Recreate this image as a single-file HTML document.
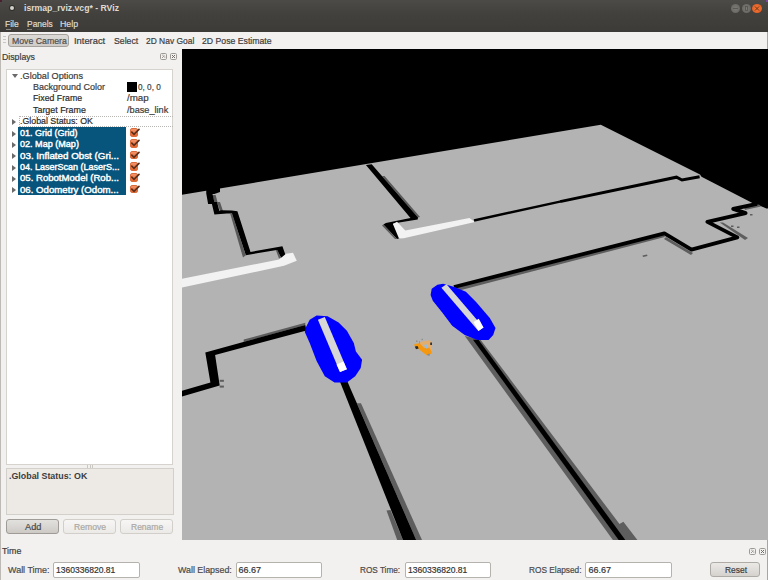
<!DOCTYPE html>
<html><head><meta charset="utf-8">
<style>
*{margin:0;padding:0;box-sizing:border-box}
html,body{width:768px;height:580px;overflow:hidden;background:#f2f1f0;font-family:"Liberation Sans",sans-serif;font-size:9px;color:#3c3c3c;position:relative}
.a{position:absolute}
.t{position:absolute;white-space:nowrap;line-height:10px;transform-origin:0 0;-webkit-text-stroke:0.2px currentColor}
.btn{position:absolute;border:1px solid #a9a7a3;border-radius:3px;background:linear-gradient(#f6f5f4,#e2e0dd)}
.inp{position:absolute;border:1px solid #b6b3ae;border-radius:2px;background:#fff}
.cb{position:absolute;width:8.5px;height:8.7px;border:1px solid #dc6c3c;border-radius:2px;background:linear-gradient(#f39469,#e5652d)}
.tri{position:absolute;width:0;height:0}
</style></head><body>
<div class="a" style="left:0;top:0;width:768px;height:32px;background:linear-gradient(#4c4b47,#42413d 40%,#3c3b37)"></div>
<div class="a" style="left:9px;top:5px;width:6px;height:6px;border-radius:50%;background:#2f2e2b"></div><div class="a" style="left:10px;top:6px;width:4px;height:4px;border-radius:50%;background:#d3d0ca"></div><div class="a" style="left:0;top:0;width:2px;height:2px;background:#4a1f30"></div><div class="a" style="left:766px;top:0;width:2px;height:2px;background:#7a4a9a"></div>
<div class="a" style="left:6px;top:29px;width:5px;height:1px;background:#8f8c85"></div>
<div class="a" style="left:27px;top:29px;width:5px;height:1px;background:#8f8c85"></div>
<div class="a" style="left:60px;top:29px;width:6px;height:1px;background:#8f8c85"></div>
<div class="a" style="left:731px;top:4px;width:9px;height:9px;border-radius:50%;background:radial-gradient(#7d7c77,#62615d)"></div>
<div class="a" style="left:733px;top:8px;width:5px;height:1px;background:#5a5955"></div>
<div class="a" style="left:742px;top:4px;width:9px;height:9px;border-radius:50%;background:radial-gradient(#7d7c77,#62615d)"></div>
<div class="a" style="left:745px;top:6px;width:3px;height:5px;border:1px solid #5a5955"></div>
<div class="a" style="left:752px;top:4px;width:10px;height:9px;border-radius:50%;background:radial-gradient(#f47a3c,#e0561d)"></div>
<svg class="a" style="left:752px;top:4px" width="10" height="9"><path d="M3 2.5L7 6.5M7 2.5L3 6.5" stroke="#6a3414" stroke-width="1"/></svg>

<div class="a" style="left:0;top:32px;width:768px;height:17px;background:#f2f1f0"></div>
<div class="a" style="left:3px;top:36px;width:3px;height:1px;background:#c8c6c2"></div>
<div class="a" style="left:3px;top:39px;width:3px;height:1px;background:#c8c6c2"></div>
<div class="a" style="left:3px;top:42px;width:3px;height:1px;background:#c8c6c2"></div>
<div class="btn" style="left:8px;top:34px;width:61px;height:13px;background:linear-gradient(#dcdad6,#cfccc8);border-color:#a5a29d"></div>

<div class="a" style="left:0;top:32px;width:1px;height:548px;background:#bdbab5"></div>
<svg class="a" style="left:160px;top:53px" width="7" height="7"><rect x="0.5" y="0.5" width="6" height="6" rx="1.2" fill="#f4f3f2" stroke="#9d9a95"/><path d="M2 5 L4.5 2.5 M2.2 2.2 H3.5 M4.8 4.8 V3.5" stroke="#8f8c87" stroke-width="0.9"/></svg><svg class="a" style="left:170px;top:53px" width="7" height="7"><rect x="0.5" y="0.5" width="6" height="6" rx="1.2" fill="#f4f3f2" stroke="#9d9a95"/><path d="M2 2 L5 5 M5 2 L2 5" stroke="#6f6c67" stroke-width="1"/></svg>
<div class="a" style="left:6px;top:69px;width:167px;height:396px;background:#fff;border:1px solid #d6d3ce"></div>
<div class="tri" style="left:12px;top:74px;border-left:3px solid transparent;border-right:3px solid transparent;border-top:4px solid #6a6a6a"></div>
<div class="a" style="left:127px;top:82px;width:10px;height:10px;background:#000"></div>
<div class="a" style="left:19px;top:116px;width:154px;height:11px;border:1px dotted #b9b7b3;border-right:none"></div>
<div class="tri" style="left:12px;top:119px;border-top:3px solid transparent;border-bottom:3px solid transparent;border-left:4px solid #6a6a6a"></div>
<div class="a" style="left:18px;top:127px;width:108px;height:68px;background:#07547c"></div>
<div class="cb" style="left:129.5px;top:128.00px"></div>
<svg class="a" style="left:129.5px;top:127.00px" width="11" height="11"><path d="M1.8 5.2 L4 7.3 L9 2.3" stroke="#5b2f1c" stroke-width="1.7" fill="none" stroke-linecap="round"/></svg>
<div class="cb" style="left:129.5px;top:139.33px"></div>
<svg class="a" style="left:129.5px;top:138.33px" width="11" height="11"><path d="M1.8 5.2 L4 7.3 L9 2.3" stroke="#5b2f1c" stroke-width="1.7" fill="none" stroke-linecap="round"/></svg>
<div class="cb" style="left:129.5px;top:150.66px"></div>
<svg class="a" style="left:129.5px;top:149.66px" width="11" height="11"><path d="M1.8 5.2 L4 7.3 L9 2.3" stroke="#5b2f1c" stroke-width="1.7" fill="none" stroke-linecap="round"/></svg>
<div class="cb" style="left:129.5px;top:161.99px"></div>
<svg class="a" style="left:129.5px;top:160.99px" width="11" height="11"><path d="M1.8 5.2 L4 7.3 L9 2.3" stroke="#5b2f1c" stroke-width="1.7" fill="none" stroke-linecap="round"/></svg>
<div class="cb" style="left:129.5px;top:173.32px"></div>
<svg class="a" style="left:129.5px;top:172.32px" width="11" height="11"><path d="M1.8 5.2 L4 7.3 L9 2.3" stroke="#5b2f1c" stroke-width="1.7" fill="none" stroke-linecap="round"/></svg>
<div class="cb" style="left:129.5px;top:184.65px"></div>
<svg class="a" style="left:129.5px;top:183.65px" width="11" height="11"><path d="M1.8 5.2 L4 7.3 L9 2.3" stroke="#5b2f1c" stroke-width="1.7" fill="none" stroke-linecap="round"/></svg>
<div class="tri" style="left:12px;top:130.5px;border-top:3px solid transparent;border-bottom:3px solid transparent;border-left:4px solid #6a6a6a"></div>
<div class="tri" style="left:12px;top:141.8px;border-top:3px solid transparent;border-bottom:3px solid transparent;border-left:4px solid #6a6a6a"></div>
<div class="tri" style="left:12px;top:153.2px;border-top:3px solid transparent;border-bottom:3px solid transparent;border-left:4px solid #6a6a6a"></div>
<div class="tri" style="left:12px;top:164.5px;border-top:3px solid transparent;border-bottom:3px solid transparent;border-left:4px solid #6a6a6a"></div>
<div class="tri" style="left:12px;top:175.8px;border-top:3px solid transparent;border-bottom:3px solid transparent;border-left:4px solid #6a6a6a"></div>
<div class="tri" style="left:12px;top:187.2px;border-top:3px solid transparent;border-bottom:3px solid transparent;border-left:4px solid #6a6a6a"></div>

<div class="a" style="left:6px;top:468px;width:168px;height:47px;background:#edeae6;border:1px solid #d3d0cb"></div>
<div class="btn" style="left:6px;top:519px;width:53px;height:15px;background:linear-gradient(#e3e1de,#cdcac6);border-color:#9f9c97"></div>
<div class="btn" style="left:63px;top:519px;width:53px;height:15px;background:linear-gradient(#f7f6f5,#eceae7);border-color:#d2cfca"></div>
<div class="btn" style="left:120px;top:519px;width:53px;height:15px;background:linear-gradient(#f7f6f5,#eceae7);border-color:#d2cfca"></div>

<svg class="a" style="left:749px;top:548px" width="7" height="7"><rect x="0.5" y="0.5" width="6" height="6" rx="1.2" fill="#f4f3f2" stroke="#9d9a95"/><path d="M2 5 L4.5 2.5 M2.2 2.2 H3.5 M4.8 4.8 V3.5" stroke="#8f8c87" stroke-width="0.9"/></svg><svg class="a" style="left:759px;top:548px" width="7" height="7"><rect x="0.5" y="0.5" width="6" height="6" rx="1.2" fill="#f4f3f2" stroke="#9d9a95"/><path d="M2 2 L5 5 M5 2 L2 5" stroke="#6f6c67" stroke-width="1"/></svg>
<div class="inp" style="left:53px;top:562px;width:87px;height:16px"></div>
<div class="inp" style="left:236px;top:562px;width:86px;height:16px"></div>
<div class="inp" style="left:405px;top:562px;width:86px;height:16px"></div>
<div class="inp" style="left:585px;top:562px;width:87px;height:16px"></div>
<div class="btn" style="left:710px;top:562px;width:50px;height:15px;background:linear-gradient(#ebe9e6,#d5d2ce);border-color:#aeaba6"></div>
<div class="a" style="left:767px;top:32px;width:1px;height:548px;background:#a9a6a1"></div>

<div class="a" style="left:87px;top:465px;width:1px;height:3px;background:#cac7c2"></div><div class="a" style="left:89.5px;top:465px;width:1px;height:3px;background:#cac7c2"></div><div class="a" style="left:92px;top:465px;width:1px;height:3px;background:#cac7c2"></div>

<svg class="a" style="left:182px;top:49px" width="586" height="491" viewBox="182 49 586 491" shape-rendering="geometricPrecision">
<rect x="182" y="49" width="586" height="491" fill="#000"/>
<!-- floor -->
<polygon fill="#b3b3b3" points="182,194.8 600.8,124.8 700,174.6 701.5,176.7 753.9,203.8 760.1,205.8 766.3,208.4 768,208.4 768,540 182,540"/>
<!-- top-right step wall region -->
<polyline fill="none" stroke="#000" stroke-width="3" points="560,201.6 676.5,177.2 682,180 699.6,176.7"/>
<!-- W1 left zigzag -->
<polygon fill="#5a5a5a" points="212.5,195 215.6,195 217.5,202 214.4,202"/>
<polygon fill="#5a5a5a" points="217,202 220,202 223,211 220,211"/>
<polygon fill="#000" points="206.25,193.4 206.25,188.5 220,186.2 220,192.1 214.4,194 212.5,194 214.4,202 217,202 219.4,211 221,210.3 231.75,210.5 237.4,211.2 250.5,251.9 282.4,246.3 286.1,256.6 281.4,258 276.7,250 245.8,255.2 231.75,213.5 226.9,213.4 214.4,214.6 211.9,204 208.1,204"/>
<polygon fill="#5a5a5a" points="230,213 232,213 245.8,255.2 243,257.5"/>
<polygon fill="#5a5a5a" points="275.8,250 277.5,250 281,258 279,258.5"/>
<!-- W1 white strip -->
<polygon fill="#f2f2f2" points="182,278.8 279,259.5 286,253.8 293,252.8 296.8,260.8 284,265.8 182,287.4"/>
<!-- W_top -->
<polygon fill="#5a5a5a" points="382,176 384.5,176 420,217 418,217.5"/>
<polygon fill="#000" points="365.9,165 371.7,164.3 418,217.5 417.7,219.5 393,223.5 402,237.4 397,239 383.4,224.6 385.9,222.9 410.5,218"/>
<polygon fill="#5a5a5a" points="382,225.5 383.4,224.6 397,239 395,239"/>
<polygon fill="#f2f2f2" points="392.9,224.1 397,221.7 405.3,230.4 469.4,217.9 474.9,222 403.7,238.2 399,238.5"/>
<polyline fill="none" stroke="#000" stroke-width="2.5" points="474,220.5 560,201.6"/>
<!-- W2 middle wall -->
<polyline fill="none" stroke="#5e5e5e" stroke-width="3.5" points="456,289.5 664.4,235.3"/>
<polygon fill="#5e5e5e" points="666,237 693,253 691,255 664,239"/>
<polygon fill="#5e5e5e" points="719.8,222.5 723,222.5 748,238 745,240"/>
<polygon fill="#5e5e5e" points="744,207.5 759,204.5 761,206.5 745,210"/>
<polyline fill="none" stroke="#000" stroke-width="3.8" stroke-linejoin="round" points="454,287 664.4,233.3 691.5,249.6 737.4,237.4 707.4,221.9 745.6,213.1 733.2,208.9 757,203.8"/>
<rect x="731" y="225.5" width="2.5" height="1.5" fill="#5e5e5e"/>
<rect x="737" y="226.5" width="2.5" height="1.5" fill="#5e5e5e"/>
<rect x="750" y="214" width="2.5" height="1.5" fill="#5e5e5e"/>
<!-- W3 left lower zigzag -->
<polygon fill="#5e5e5e" points="243.7,339.6 305.3,322.8 305.3,325 243.7,342"/>
<polygon fill="#000" points="305.3,325 306.5,330.5 215.1,355 219.7,385.5 182,396.4 182,390.7 210.4,382.4 205.3,352.4"/>
<rect x="219.7" y="379.8" width="4.2" height="2" fill="#5e5e5e"/>
<rect x="219.7" y="385.6" width="4.2" height="2" fill="#5e5e5e"/>
<!-- W4 -->
<polygon fill="#5e5e5e" points="356.9,403.3 361,403.3 422,540 416.2,540"/>
<polygon fill="#5e5e5e" points="386.5,510.4 390.5,510 403,540 397.2,540"/>
<polygon fill="#000" points="340,381.7 347.5,381.7 416.2,540 403,540"/>
<!-- W5 -->
<polygon fill="#5e5e5e" points="464.8,336 480.5,339.7 619.5,524 623.4,521.7 637.4,540 612.9,540"/>
<polygon fill="#000" points="473,339.7 478.5,339.7 625.3,540 618.7,540"/>
<!-- blob left -->
<polygon fill="#0000ff" points="305.5,327.9 309.7,319.7 316.6,315.5 327.6,316.2 338.6,322.4 346.9,330.7 353.8,343.1 355.9,351.4 362.1,359.7 360.7,367.9 355.2,376.2 346.9,382.4 334.5,382.4 324.8,376.2 316.6,361 309.7,343.1 304.8,332"/>
<polygon fill="#d6d6d6" points="317.9,319.7 324.8,316.9 346.9,369.3 340,372"/>
<polygon fill="#ffffff" points="336.5,364.5 343.5,361.5 346.9,369.3 340,372"/>
<!-- blob right -->
<polygon fill="#0000ff" points="430.6,295.1 431.7,288.8 437.4,284.8 443.1,283.7 454.5,287.1 465.9,291.7 476.1,301.9 489.8,317.9 495.5,328.1 493.2,335 488.6,340.1 477.3,340.1 464.7,335 452.2,325.8 442,312.2 432.8,300.8"/>
<polygon fill="#d6d6d6" points="441.4,287.7 446.5,284.3 483.5,327.5 478.4,331"/>
<polygon fill="#ffffff" points="473.5,322 478.8,318.8 483.5,327.5 478.4,331"/>
<!-- robot -->
<polygon fill="#e3ad6e" points="419.5,343.3 420.3,342.1 429,340.2 431.4,341.7 431.8,352 424.3,348.1"/>
<polygon fill="#f6980f" points="414.4,344.1 419.5,343.3 424.3,348.1 429.4,347.7 431.8,352.1 431.4,353.7 426.7,355.2 421.1,350.9 416,346.9 414.4,345.7"/>
<polygon fill="#94bde0" points="424,345 426.5,344.2 428.5,347.5 426,348.8"/>
<polygon fill="#2a2a2a" points="414.8,346.5 417.5,346.1 418.7,348.5 416,349.3"/>
<rect x="430.2" y="342.5" width="1.8" height="2.5" fill="#333"/>
<rect x="427.5" y="353.8" width="2.3" height="1.8" fill="#8a8a8a"/>
<rect x="416" y="340.5" width="1.5" height="1.5" fill="#8f8f8f"/>
<rect x="421.5" y="338.8" width="1.5" height="1.3" fill="#8f8f8f"/>
<rect x="419" y="341" width="0.8" height="2.5" fill="#8f8f8f"/>
<!-- dashes -->
<polygon fill="#5e5e5e" points="642.5,255.5 647,254.5 647.5,256 643,257"/>
</svg>
<div class="t" style="left:24px;top:3.28px;font-size:9px;font-weight:bold;color:#dfdbd2;transform:scaleX(0.962);-webkit-text-stroke:0;">isrmap_rviz.vcg* - RViz</div>
<div class="t" style="left:5px;top:19.31px;font-size:9.5px;font-weight:normal;color:#dfdbd2;transform:scaleX(0.895);">File</div>
<div class="t" style="left:26.6px;top:19.31px;font-size:9.5px;font-weight:normal;color:#dfdbd2;transform:scaleX(0.888);">Panels</div>
<div class="t" style="left:60.2px;top:19.31px;font-size:9.5px;font-weight:normal;color:#dfdbd2;transform:scaleX(0.921);">Help</div>
<div class="t" style="left:11.5px;top:36.18px;font-size:9px;font-weight:normal;color:#4f4f4f;transform:scaleX(0.969);">Move Camera</div>
<div class="t" style="left:74px;top:36.18px;font-size:9px;font-weight:normal;color:#3c3c3c;transform:scaleX(1.039);">Interact</div>
<div class="t" style="left:113.5px;top:36.18px;font-size:9px;font-weight:normal;color:#3c3c3c;transform:scaleX(0.967);">Select</div>
<div class="t" style="left:146px;top:36.18px;font-size:9px;font-weight:normal;color:#3c3c3c;transform:scaleX(0.937);">2D Nav Goal</div>
<div class="t" style="left:202.3px;top:36.18px;font-size:9px;font-weight:normal;color:#3c3c3c;transform:scaleX(0.966);">2D Pose Estimate</div>
<div class="t" style="left:2.25px;top:51.88px;font-size:9px;font-weight:normal;color:#3c3c3c;transform:scaleX(0.970);">Displays</div>
<div class="t" style="left:20px;top:70.68px;font-size:9px;font-weight:normal;color:#3c3c3c;transform:scaleX(1.016);">.Global Options</div>
<div class="t" style="left:32.75px;top:82.28px;font-size:9px;font-weight:normal;color:#3c3c3c;transform:scaleX(0.999);">Background Color</div>
<div class="t" style="left:32.75px;top:93.48px;font-size:9px;font-weight:normal;color:#2a2a2a;transform:scaleX(0.972);">Fixed Frame</div>
<div class="t" style="left:32.75px;top:104.78px;font-size:9px;font-weight:normal;color:#2a2a2a;transform:scaleX(0.988);">Target Frame</div>
<div class="t" style="left:20px;top:116.38px;font-size:9px;font-weight:normal;color:#2a2a2a;transform:scaleX(0.979);">.Global Status: OK</div>
<div class="t" style="left:138.25px;top:82.28px;font-size:9px;font-weight:normal;color:#3c3c3c;transform:scaleX(0.909);">0, 0, 0</div>
<div class="t" style="left:127.25px;top:93.48px;font-size:9px;font-weight:normal;color:#3c3c3c;transform:scaleX(1.087);">/map</div>
<div class="t" style="left:127.25px;top:104.78px;font-size:9px;font-weight:normal;color:#3c3c3c;transform:scaleX(1.018);">/base_link</div>
<div class="t" style="left:20.3px;top:127.92px;font-size:8.6px;font-weight:normal;color:#ffffff;transform:scaleX(1.049);-webkit-text-stroke:0.4px #fff;">01. Grid (Grid)</div>
<div class="t" style="left:20.3px;top:139.30px;font-size:8.6px;font-weight:normal;color:#ffffff;transform:scaleX(1.054);-webkit-text-stroke:0.4px #fff;">02. Map (Map)</div>
<div class="t" style="left:20.3px;top:150.68px;font-size:8.6px;font-weight:normal;color:#ffffff;transform:scaleX(1.139);-webkit-text-stroke:0.4px #fff;">03. Inflated Obst (Gri...</div>
<div class="t" style="left:20.3px;top:162.06px;font-size:8.6px;font-weight:normal;color:#ffffff;transform:scaleX(1.047);-webkit-text-stroke:0.4px #fff;">04. LaserScan (LaserS...</div>
<div class="t" style="left:20.3px;top:173.44px;font-size:8.6px;font-weight:normal;color:#ffffff;transform:scaleX(1.114);-webkit-text-stroke:0.4px #fff;">05. RobotModel (Rob...</div>
<div class="t" style="left:20.3px;top:184.82px;font-size:8.6px;font-weight:normal;color:#ffffff;transform:scaleX(1.122);-webkit-text-stroke:0.4px #fff;">06. Odometry (Odom...</div>
<div class="t" style="left:8.5px;top:471.38px;font-size:9px;font-weight:bold;color:#3c3c3c;transform:scaleX(0.985);-webkit-text-stroke:0;">.Global Status: OK</div>
<div class="t" style="left:25px;top:521.68px;font-size:9px;font-weight:normal;color:#4a4a4a;transform:scaleX(1.024);">Add</div>
<div class="t" style="left:74.2px;top:521.68px;font-size:9px;font-weight:normal;color:#aaa8a4;transform:scaleX(0.955);">Remove</div>
<div class="t" style="left:130.9px;top:521.68px;font-size:9px;font-weight:normal;color:#aaa8a4;transform:scaleX(0.944);">Rename</div>
<div class="t" style="left:2.3px;top:546.28px;font-size:9px;font-weight:normal;color:#3c3c3c;transform:scaleX(0.981);">Time</div>
<div class="t" style="left:7.5px;top:564.68px;font-size:9px;font-weight:normal;color:#4a4a4a;transform:scaleX(0.997);">Wall Time:</div>
<div class="t" style="left:56.25px;top:564.68px;font-size:9px;font-weight:normal;color:#333333;transform:scaleX(0.948);">1360336820.81</div>
<div class="t" style="left:177.5px;top:564.68px;font-size:9px;font-weight:normal;color:#4a4a4a;transform:scaleX(0.983);">Wall Elapsed:</div>
<div class="t" style="left:238.5px;top:564.68px;font-size:9px;font-weight:normal;color:#333333;">66.67</div>
<div class="t" style="left:360px;top:564.68px;font-size:9px;font-weight:normal;color:#4a4a4a;transform:scaleX(0.911);">ROS Time:</div>
<div class="t" style="left:407.5px;top:564.68px;font-size:9px;font-weight:normal;color:#333333;transform:scaleX(0.948);">1360336820.81</div>
<div class="t" style="left:528.75px;top:564.68px;font-size:9px;font-weight:normal;color:#4a4a4a;transform:scaleX(0.921);">ROS Elapsed:</div>
<div class="t" style="left:588.5px;top:564.68px;font-size:9px;font-weight:normal;color:#333333;">66.67</div>
<div class="t" style="left:724.75px;top:564.68px;font-size:9px;font-weight:normal;color:#3c3c3c;transform:scaleX(0.936);">Reset</div>
</body></html>
